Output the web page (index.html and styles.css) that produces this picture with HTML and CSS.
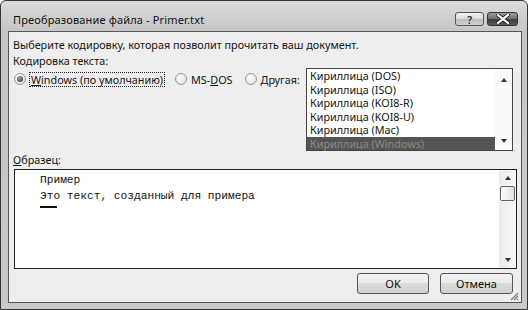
FILE: index.html
```html
<!DOCTYPE html>
<html lang="ru">
<head>
  <meta charset="UTF-8">
  <title>Преобразование файла - Primer.txt</title>
  <link rel="stylesheet" href="styles.css">
</head>
<body>

<div class="window">
  <!-- Заголовок окна -->
  <div class="titlebar">
    <span class="title">Преобразование файла - Primer.txt</span>
    <div class="caption-btns">
      <span class="cap-btn help">?</span>
      <span class="cap-btn close">
        <svg width="14" height="10" viewBox="0 0 14 10">
          <path d="M2 1 L12 9 M12 1 L2 9" stroke="#222" stroke-width="4" stroke-linecap="square"/>
          <path d="M2 1 L12 9 M12 1 L2 9" stroke="#fff" stroke-width="2.2" stroke-linecap="square"/>
        </svg>
      </span>
    </div>
  </div>

  <div class="client">
    <p class="line intro">Выберите кодировку, которая позволит прочитать ваш документ.</p>
    <p class="line label">Кодировка текста:</p>

    <div class="encoding">
      <div class="radios">
        <label class="radio checked"><span class="dot"></span><span class="focus"><u>W</u>indows (по умолчанию)</span></label>
        <label class="radio"><span class="dot"></span><span class="caption">MS-<u>D</u>OS</span></label>
        <label class="radio"><span class="dot"></span><span class="caption"><u>Д</u>ругая:</span></label>
      </div>

      <div class="listbox">
        <ul class="items">
          <li>Кириллица (DOS)</li>
          <li>Кириллица (ISO)</li>
          <li>Кириллица (KOI8-R)</li>
          <li>Кириллица (KOI8-U)</li>
          <li>Кириллица (Mac)</li>
          <li class="selected">Кириллица (Windows)</li>
        </ul>
        <div class="vscroll plain">
          <span class="arr up"></span>
          <span class="arr down"></span>
        </div>
      </div>
    </div>

    <p class="line sample-label"><u>О</u>бразец:</p>

    <div class="sample">
      <div class="sample-text">
        <div>Пример</div>
        <div>Это текст, созданный для примера</div>
        <div class="caret"></div>
      </div>
      <div class="vscroll">
        <span class="arr up"></span>
        <span class="thumb"></span>
        <span class="arr down"></span>
      </div>
    </div>

    <div class="footer">
      <button class="btn">OK</button>
      <button class="btn">Отмена</button>
    </div>

    <span class="grip">
      <svg width="10" height="10" viewBox="0 0 10 10">
        <path d="M9 2 L2 9 M9 5 L5 9 M9 8 L8 9" stroke="#777" stroke-width="1.2"/>
      </svg>
    </span>
  </div>
</div>

</body>
</html>
```

FILE: styles.css
```css
* { margin: 0; padding: 0; box-sizing: border-box; }

html, body {
  width: 528px;
  height: 310px;
  background: #fff;
  overflow: hidden;
  font-family: 'Noto Sans', 'Open Sans', sans-serif;
  font-size: 10.8px;
  color: #141414;
}

.window {
  width: 528px;
  height: 310px;
  border: 1px solid #333;
  border-radius: 6px 6px 0 0;
  padding: 0 5px 6px 7px;
  background: linear-gradient(#dadada, #c6c6c6 30px, #c9c9c9);
  display: flex;
  flex-direction: column;
}

.titlebar {
  height: 30px;
  display: flex;
  align-items: flex-start;
  padding: 11px 4px 0 5px;
}

.title {
  line-height: 16px;
  font-size: 11px;
  letter-spacing: 0.15px;
  color: #111;
}

.caption-btns {
  margin-left: auto;
  display: flex;
  gap: 3px;
}

.cap-btn {
  height: 14px;
  border: 1px solid #555;
  border-radius: 3px;
  display: flex;
  align-items: center;
  justify-content: center;
}

.cap-btn.help {
  width: 29px;
  background: linear-gradient(#f0f0f0, #d8d8d8 50%, #bcbcbc 51%, #d0d0d0);
  font-weight: 700;
  font-size: 11px;
  color: #333;
  text-shadow: 0 0 1px #fff;
}

.cap-btn.close {
  width: 31px;
  background: linear-gradient(#9a9a9a, #6e6e6e 50%, #3c3c3c 51%, #5a5a5a);
  border-color: #333;
}

.client {
  position: relative;
  width: 514px;
  height: 272px;
  border: 1px solid #555;
  background: #eeeeee;
  padding: 5px 6px 8px 4px;
  display: flex;
  flex-direction: column;
}

.line {
  line-height: 16px;
}

.line.label {
  line-height: 15px;
}

.encoding {
  display: flex;
  height: 83px;
}

.radios {
  display: flex;
  align-items: flex-start;
  flex-shrink: 0;
  padding-top: 3px;
  gap: 10px;
  white-space: nowrap;
}

.radio {
  display: flex;
  align-items: center;
  height: 16px;
  gap: 3px;
}

.dot {
  flex-shrink: 0;
  width: 12px;
  height: 12px;
  border: 1px solid #999;
  border-radius: 50%;
  background: radial-gradient(circle at 40% 35%, #fff, #dadada);
  display: flex;
  align-items: center;
  justify-content: center;
}

.radio:first-child .dot { margin-left: 1px; }

.radio.checked .dot::after {
  content: "";
  width: 6px;
  height: 6px;
  border-radius: 50%;
  background: radial-gradient(circle at 40% 35%, #aaa, #222);
}

.focus {
  border: 1px dotted #222;
  padding: 0 1px;
  line-height: 13px;
}

.caption {
  padding: 0 2px 0 1px;
}

.listbox {
  margin-left: auto;
  margin-right: 2px;
  width: 207px;
  height: 83px;
  border: 1px solid #444;
  background: #fff;
  display: flex;
}

.items {
  list-style: none;
  flex: 1;
}

.items li {
  height: 13.5px;
  line-height: 13.5px;
  padding-left: 3px;
}

.items li.selected {
  background: #555;
  color: #8c8c8c;
}

.vscroll {
  width: 17px;
  background: linear-gradient(90deg, #ececec, #f8f8f8);
  display: flex;
  flex-direction: column;
  align-items: center;
  padding: 6px 0;
}

.vscroll.plain {
  background: #fafafa;
  padding: 9px 0 7px;
}

.arr {
  width: 0;
  height: 0;
  border-left: 3.5px solid transparent;
  border-right: 3.5px solid transparent;
}

.arr.up { border-bottom: 4px solid #333; }
.arr.down { border-top: 4px solid #333; margin-top: auto; }

.thumb {
  width: 15px;
  height: 15px;
  margin-top: 6px;
  border: 1px solid #666;
  border-radius: 2px;
  background: linear-gradient(90deg, #fbfbfb, #e2e2e2);
}

.sample-label {
  margin-top: 1px;
}

.sample {
  margin: 1px -2px 0 1px;
  height: 100px;
  border: 1px solid #222;
  background: #fff;
  display: flex;
}

.sample-text {
  flex: 1;
  padding: 2px 0 0 25px;
  font-family: 'Liberation Mono', 'Courier New', monospace;
  font-size: 11.2px;
  line-height: 16px;
  color: #111;
}

.caret {
  width: 17px;
  height: 2px;
  margin-top: 2px;
  background: #111;
}

.footer {
  margin-top: 4px;
  display: flex;
  justify-content: flex-end;
  gap: 11px;
  padding-right: 2px;
}

.btn {
  width: 72px;
  height: 21px;
  border: 1px solid #555;
  border-radius: 3px;
  background: linear-gradient(#f4f4f4, #ebebeb 45%, #dcdcdc 50%, #cfcfcf);
  font-family: inherit;
  font-size: 11px;
  color: #111;
}

.btn + .btn { width: 73px; }

.grip {
  position: absolute;
  right: 2px;
  bottom: 1px;
  display: flex;
}
```
